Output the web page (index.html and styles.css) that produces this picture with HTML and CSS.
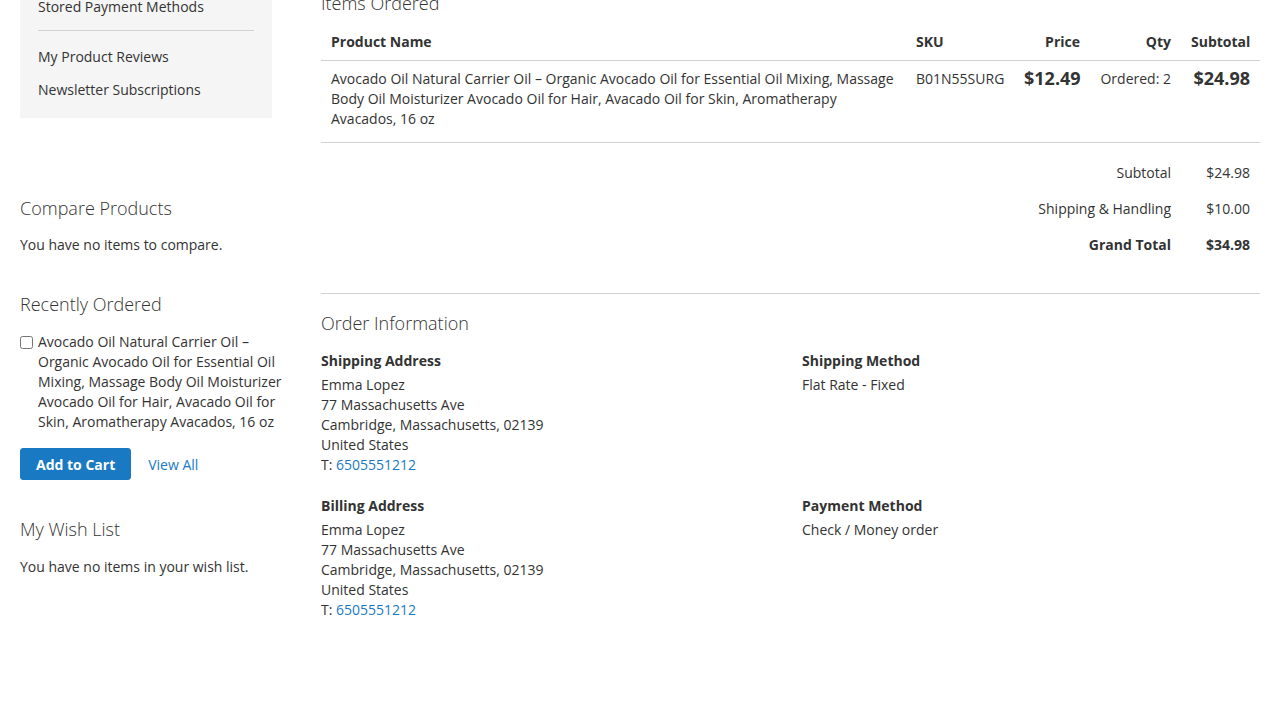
FILE: index.html
```html
<!DOCTYPE html>
<html lang="en">
<head>
<meta charset="utf-8">
<title>Order</title>
<link rel="stylesheet" href="styles.css">
</head>
<body>
<div class="page">
  <aside class="sidebar">
    <nav class="account-nav">
      <ul class="nav-items">
        <li class="item"><a href="#">Stored Payment Methods</a></li>
        <li class="delimiter"></li>
        <li class="item"><a href="#">My Product Reviews</a></li>
        <li class="item"><a href="#">Newsletter Subscriptions</a></li>
      </ul>
    </nav>

    <div class="block block-compare">
      <div class="block-title">Compare Products</div>
      <div class="block-content">You have no items to compare.</div>
    </div>

    <div class="block block-reorder">
      <div class="block-title">Recently Ordered</div>
      <div class="block-content">
        <label class="reorder-item">
          <input type="checkbox" class="checkbox">
          <span>Avocado Oil Natural Carrier Oil – Organic Avocado Oil for Essential Oil Mixing, Massage Body Oil Moisturizer Avocado Oil for Hair, Avacado Oil for Skin, Aromatherapy Avacados, 16 oz</span>
        </label>
        <div class="actions">
          <button class="btn-primary" type="button">Add to Cart</button>
          <a href="#" class="link view-all">View All</a>
        </div>
      </div>
    </div>

    <div class="block block-wishlist">
      <div class="block-title">My Wish List</div>
      <div class="block-content">You have no items in your wish list.</div>
    </div>
  </aside>

  <main class="main">
    <div class="order-title">Items Ordered</div>
    <table class="items-table">
      <colgroup>
        <col class="c-name"><col class="c-sku"><col class="c-price"><col class="c-qty"><col class="c-sub">
      </colgroup>
      <thead>
        <tr>
          <th>Product Name</th>
          <th>SKU</th>
          <th class="num">Price</th>
          <th class="num">Qty</th>
          <th class="num">Subtotal</th>
        </tr>
      </thead>
      <tbody>
        <tr>
          <td>Avocado Oil Natural Carrier Oil – Organic Avocado Oil for Essential Oil Mixing, Massage Body Oil Moisturizer Avocado Oil for Hair, Avacado Oil for Skin, Aromatherapy Avacados, 16 oz</td>
          <td>B01N55SURG</td>
          <td class="num"><span class="price">$12.49</span></td>
          <td class="num">Ordered: 2</td>
          <td class="num"><span class="price">$24.98</span></td>
        </tr>
      </tbody>
      <tfoot>
        <tr class="first">
          <td colspan="4" class="num">Subtotal</td>
          <td class="num">$24.98</td>
        </tr>
        <tr>
          <td colspan="4" class="num">Shipping &amp; Handling</td>
          <td class="num">$10.00</td>
        </tr>
        <tr class="grand">
          <td colspan="4" class="num">Grand Total</td>
          <td class="num">$34.98</td>
        </tr>
      </tfoot>
    </table>

    <section class="order-info">
      <div class="info-title">Order Information</div>
      <div class="info-grid">
        <div class="box">
          <div class="box-title">Shipping Address</div>
          <address class="box-content">Emma Lopez<br>77 Massachusetts Ave<br>Cambridge, Massachusetts, 02139<br>United States<br>T: <a href="#" class="link">6505551212</a></address>
        </div>
        <div class="box">
          <div class="box-title">Shipping Method</div>
          <div class="box-content">Flat Rate - Fixed</div>
        </div>
        <div class="box">
          <div class="box-title">Billing Address</div>
          <address class="box-content">Emma Lopez<br>77 Massachusetts Ave<br>Cambridge, Massachusetts, 02139<br>United States<br>T: <a href="#" class="link">6505551212</a></address>
        </div>
        <div class="box">
          <div class="box-title">Payment Method</div>
          <div class="box-content">Check / Money order</div>
        </div>
      </div>
    </section>
  </main>
</div>
</body>
</html>
```
FILE: styles.css
```css
html, body {
  margin: 0;
  padding: 0;
  background: #fff;
}
body {
  font-family: "Open Sans", "Liberation Sans", sans-serif;
  font-size: 14px;
  line-height: 20px;
  color: #333;
}
.page {
  display: grid;
  grid-template-columns: 276px 1fr;
  padding: 0 20px;
  margin-top: -24px;
}
.link {
  color: #1979c3;
  text-decoration: none;
}

/* sidebar */
.account-nav {
  background: #f5f5f5;
  margin-right: 24px;
  padding: 15px 0 14px;
  margin-bottom: 80px;
}
.nav-items {
  list-style: none;
  margin: 0;
  padding: 0;
}
.nav-items .item + .item {
  margin-top: 3px;
}
.nav-items .item a {
  display: block;
  padding: 6px 18px 4px 15px;
  border-left: 3px solid transparent;
  color: #333;
  text-decoration: none;
}
.nav-items .delimiter {
  border-top: 1px solid #d1d1d1;
  margin: 9px 18px 10px;
}
.block-title {
  font-size: 18px;
  font-weight: 300;
  line-height: 20px;
  margin-bottom: 18px;
}
.block-compare .block-title {
  margin-bottom: 17px;
}
.block-reorder {
  margin-top: 39px;
}
.block-wishlist {
  margin-top: 39px;
}
.reorder-item {
  display: flex;
  align-items: flex-start;
}
.reorder-item .checkbox {
  width: 13px;
  height: 13px;
  margin: 4px 5px 0 0;
  flex: none;
}
.actions {
  display: flex;
  align-items: center;
  gap: 17px;
  margin-top: 16px;
}
.btn-primary {
  font-family: inherit;
  font-size: 14px;
  font-weight: 700;
  line-height: 16px;
  padding: 8px 15px 6px;
  background: #1979c3;
  border: 1px solid #1979c3;
  border-radius: 3px;
  color: #fff;
  cursor: pointer;
}
.view-all {
  padding-top: 2px;
}

/* main */
.main {
  padding-left: 25px;
  min-width: 0;
}
.order-title {
  font-size: 18px;
  font-weight: 300;
  line-height: 20px;
  margin: 17px 0 10px;
}
.items-table {
  width: 100%;
  border-collapse: collapse;
  table-layout: fixed;
}
.c-name { width: 585px; }
.c-sku { width: 108px; }
.c-price { width: 76px; }
.c-qty { width: 91px; }
.c-sub { width: 79px; }
.items-table th {
  text-align: left;
  font-weight: 700;
  padding: 9px 10px 8px;
  border-bottom: 1px solid #d1d1d1;
}
.items-table .num {
  text-align: right;
}
.items-table tbody td {
  padding: 8px 10px 13px;
  vertical-align: top;
  border-bottom: 1px solid #d1d1d1;
}
.price {
  display: block;
  margin-top: -1px;
  font-size: 18px;
  font-weight: 700;
  line-height: 20px;
}
.items-table tfoot td {
  padding: 9px 10px 7px;
}
.items-table tfoot .first td {
  padding-top: 20px;
}
.items-table tfoot .grand td {
  font-weight: 700;
}

.order-info {
  margin-top: 31px;
  border-top: 1px solid #d1d1d1;
  padding-top: 19px;
}
.info-title {
  font-size: 18px;
  font-weight: 300;
  line-height: 20px;
  margin-bottom: 18px;
}
.info-grid {
  display: grid;
  grid-template-columns: 481px 1fr;
  row-gap: 21px;
}
.box-title {
  font-weight: 700;
  margin-bottom: 4px;
}
.box-content {
  font-style: normal;
}
```
